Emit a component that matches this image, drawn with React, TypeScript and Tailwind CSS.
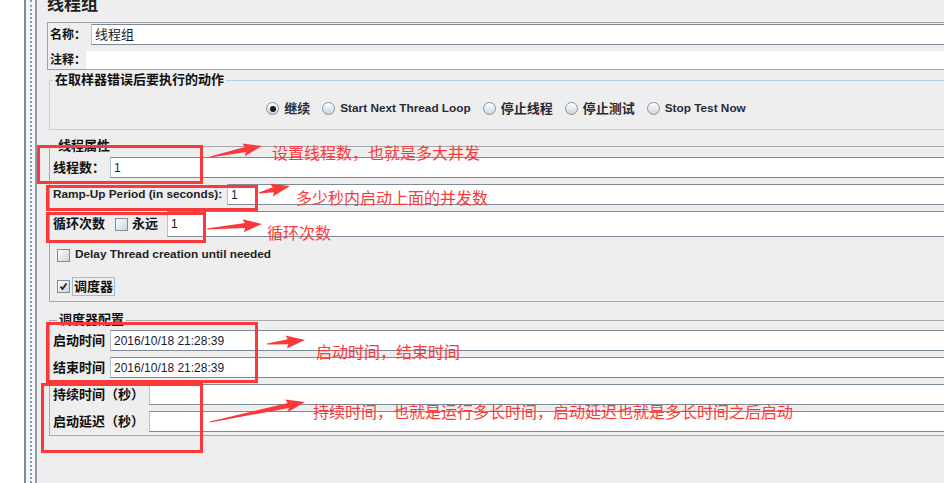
import React from 'react';

const arrows = [
    [210, 157, 262, 146],
    [259, 193, 290, 186],
    [207, 229, 262, 224],
    [267, 344, 305, 340],
    [210, 422, 305, 402],
];

const notes = [
    { x: 272, y: 144, text: '设置线程数，也就是多大并发' },
    { x: 296, y: 189, text: '多少秒内启动上面的并发数' },
    { x: 267, y: 224, text: '循环次数' },
    { x: 316, y: 343, text: '启动时间，结束时间' },
    { x: 313, y: 403, text: '持续时间，也就是运行多长时间，启动延迟也就是多长时间之后启动' },
];

const boxes = [
    { x: 37, y: 145, w: 166, h: 39 },
    { x: 46, y: 185, w: 212, h: 26 },
    { x: 46, y: 212, w: 160, h: 31 },
    { x: 46, y: 322, w: 212, h: 61 },
    { x: 41, y: 383, w: 162, h: 70 },
];

function arrowPoints(x1: number, y1: number, x2: number, y2: number) {
    const dx = x2 - x1;
    const dy = y2 - y1;
    const len = Math.hypot(dx, dy);
    const ux = dx / len;
    const uy = dy / len;
    const nx = -uy;
    const ny = ux;
    const head = 17;
    const bx = x2 - ux * head;
    const by = y2 - uy * head;
    const bx2 = x2 - ux * (head + 2);
    const by2 = y2 - uy * (head + 2);
    const pts = [
        [x1 + nx * 0.6, y1 + ny * 0.6],
        [bx + nx * 2.5, by + ny * 2.5],
        [bx2 + nx * 6.5, by2 + ny * 6.5],
        [x2, y2],
        [bx2 - nx * 6.5, by2 - ny * 6.5],
        [bx - nx * 2.5, by - ny * 2.5],
        [x1 - nx * 0.6, y1 - ny * 0.6],
    ];
    return pts.map((p) => `${p[0].toFixed(1)},${p[1].toFixed(1)}`).join(' ');
}

function Field({ value }: { value?: string }) {
    return (
        <div className="flex-1 h-[21px] bg-white border-y border-[#7c8a98] border-l border-l-[#b9c1c9] flex items-center pl-[3px] text-[12px] text-[#1a1a2e]">
            {value}
        </div>
    );
}

function Check({ checked }: { checked?: boolean }) {
    return (
        <span className="w-[13px] h-[13px] shrink-0 border border-[#7f8d9b] bg-linear-to-br from-[#fbfcfd] to-[#cbd5df] flex items-center justify-center">
            {checked && (
                <svg width="9" height="9" viewBox="0 0 9 9">
                    <path d="M1.5 4.5 L3.5 7 L7.5 1.5" stroke="#222" strokeWidth="1.8" fill="none" />
                </svg>
            )}
        </span>
    );
}

function Radio({ label, selected, cjk }: { label: string; selected?: boolean; cjk?: boolean }) {
    return (
        <div className="flex items-center gap-[5px]">
            <span className="w-[13px] h-[13px] rounded-full border border-[#8594a3] bg-linear-to-b from-white to-[#c9d5e1] flex items-center justify-center">
                {selected && <span className="w-[6px] h-[6px] rounded-full bg-[#1c1c1c]" />}
            </span>
            <span className={cjk ? 'text-[13px] font-bold text-[#2a2a35]' : 'text-[11.8px] font-bold text-[#2a2a35]'}>{label}</span>
        </div>
    );
}

export default function App() {
    return (
        <div className="relative w-[944px] h-[483px] overflow-hidden flex bg-white font-['Liberation_Sans','Noto_Sans_CJK_SC',sans-serif] text-[#111]">
            {/* Left tree edge */}
            <div className="w-[24px] shrink-0 bg-white" />
            <div className="w-[2px] shrink-0 bg-[#7d8a98]" />
            <div className="w-[9px] shrink-0 bg-[#f3f5f7] flex justify-center">
                <div className="w-0 border-l-2 border-dotted border-[#8d9cab]" />
            </div>
            <div className="w-[2px] shrink-0 bg-[#8e9aa8]" />

            {/* Main panel */}
            <div className="flex-1 bg-[#eeeeee] pl-[10px] overflow-hidden">
                <div className="w-[920px]">
                    {/* Title */}
                    <div className="h-[22px] overflow-hidden">
                        <div className="-mt-[6px] leading-[22px] text-[17px] font-bold text-[#222]">线程组</div>
                    </div>

                    {/* Name / comment */}
                    <div className="border border-r-0 border-[#a3a3a3] pt-[1px] flex flex-col">
                        <div className="flex items-center h-[21px]">
                            <span className="w-[43px] shrink-0 pl-[2px] text-[12px] font-bold whitespace-nowrap">名称：</span>
                            <div className="flex-1 h-[21px] bg-white border-y border-[#7c8a98] border-l border-l-[#b9c1c9] flex items-center pl-[3px] text-[13px] text-[#1a1a2e]">
                                线程组
                            </div>
                        </div>
                        <div className="flex items-center h-[18px] mt-[6px]">
                            <span className="w-[38px] shrink-0 pl-[2px] text-[12px] font-bold whitespace-nowrap">注释：</span>
                            <div className="flex-1 h-[18px] bg-white" />
                        </div>
                    </div>

                    {/* Sampler error action */}
                    <fieldset className="mt-[2px] ml-[2px] w-[914px] border border-[#b8cfe5]">
                        <legend className="ml-[3px] px-[2px] text-[13px] leading-[16px] font-bold">在取样器错误后要执行的动作</legend>
                        <div className="h-[41px] flex items-center justify-center gap-[12px]">
                            <Radio label="继续" selected cjk />
                            <Radio label="Start Next Thread Loop" />
                            <Radio label="停止线程" cjk />
                            <Radio label="停止测试" cjk />
                            <Radio label="Stop Test Now" />
                        </div>
                    </fieldset>

                    {/* Thread properties */}
                    <fieldset className="mt-[8px] ml-[2px] w-[914px] border border-[#a8a8a8] pl-[3px] pb-[5px]">
                        <legend className="ml-[3px] px-[2px] text-[13px] leading-[16px] font-bold">线程属性</legend>
                        <div className="flex items-center h-[21px] mt-[3px]">
                            <span className="w-[57px] text-[13px] font-bold">线程数：</span>
                            <Field value="1" />
                        </div>
                        <div className="flex items-center h-[21px] mt-[6px]">
                            <span className="w-[174px] text-[11.8px] font-bold text-[#222] whitespace-nowrap">Ramp-Up Period (in seconds):</span>
                            <Field value="1" />
                        </div>
                        <div className="flex items-center h-[26px] mt-[6px]">
                            <span className="w-[62px] text-[13px] font-bold">循环次数</span>
                            <Check />
                            <span className="w-[35px] ml-[4px] text-[13px] font-bold">永远</span>
                            <div className="flex-1 h-[26px] bg-white border-y border-[#7c8a98] border-l border-l-[#b9c1c9] flex items-center pl-[3px] text-[12px]">1</div>
                        </div>
                        <div className="flex items-center h-[18px] mt-[9px] pl-[4px] gap-[5px]">
                            <Check />
                            <span className="text-[11.8px] font-bold text-[#222] whitespace-nowrap">Delay Thread creation until needed</span>
                        </div>
                        <div className="flex items-center h-[20px] mt-[12px] pl-[4px] gap-[2px]">
                            <Check checked />
                            <span className="border border-[#a7bccf] px-[1px] leading-[17px] text-[13px] font-bold">调度器</span>
                        </div>
                    </fieldset>

                    {/* Scheduler config */}
                    <fieldset className="mt-[10px] ml-[2px] w-[914px] border border-[#a8a8a8] pl-[3px] pb-[3px]">
                        <legend className="ml-[4px] px-[2px] text-[13px] leading-[16px] font-bold">调度器配置</legend>
                        <div className="flex items-center h-[21px] mt-[2px]">
                            <span className="w-[57px] text-[13px] font-bold">启动时间</span>
                            <Field value="2016/10/18 21:28:39" />
                        </div>
                        <div className="flex items-center h-[21px] mt-[6px]">
                            <span className="w-[57px] text-[13px] font-bold">结束时间</span>
                            <Field value="2016/10/18 21:28:39" />
                        </div>
                        <div className="flex items-center h-[21px] mt-[6px]">
                            <span className="w-[96px] text-[13px] font-bold whitespace-nowrap">持续时间（秒）</span>
                            <Field />
                        </div>
                        <div className="flex items-center h-[21px] mt-[6px]">
                            <span className="w-[96px] text-[13px] font-bold whitespace-nowrap">启动延迟（秒）</span>
                            <Field />
                        </div>
                    </fieldset>
                </div>
            </div>

            {/* Red annotations */}
            {boxes.map((b, i) => (
                <div
                    key={i}
                    className="absolute border-[3px] border-[#fa3a3a] pointer-events-none"
                    style={{ left: b.x, top: b.y, width: b.w, height: b.h }}
                />
            ))}
            <svg className="absolute inset-0 pointer-events-none" width="944" height="483">
                {arrows.map((a, i) => (
                    <polygon key={i} points={arrowPoints(a[0], a[1], a[2], a[3])} fill="#fa3a3a" />
                ))}
            </svg>
            {notes.map((n, i) => (
                <div
                    key={i}
                    className="absolute text-[16px] leading-[16px] text-[#fa3a3a] whitespace-nowrap font-['Noto_Sans_CJK_SC',sans-serif]"
                    style={{ left: n.x, top: n.y }}
                >
                    {n.text}
                </div>
            ))}
        </div>
    );
}
